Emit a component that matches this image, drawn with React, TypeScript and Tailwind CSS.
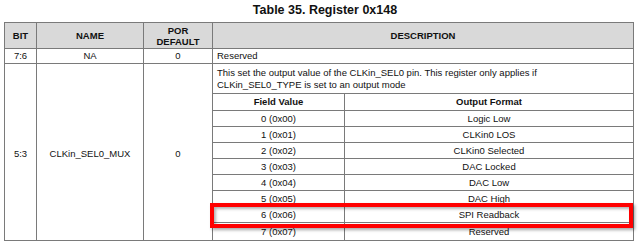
import React from 'react';

// register 0x148, CLKin_SEL0_MUX field values
const muxValues: [string, string][] = [
  ['0 (0x00)', 'Logic Low'],
  ['1 (0x01)', 'CLKin0 LOS'],
  ['2 (0x02)', 'CLKin0 Selected'],
  ['3 (0x03)', 'DAC Locked'],
  ['4 (0x04)', 'DAC Low'],
  ['5 (0x05)', 'DAC High'],
  ['6 (0x06)', 'SPI Readback'],
  ['7 (0x07)', 'Reserved'],
];

const cell = 'flex items-center justify-center border-r border-[#7a7a7a]';

export default function App() {
  return (
    <div className="relative w-[640px] h-[242px] bg-white overflow-hidden text-[#111] font-['Liberation_Sans',Arial,sans-serif]">
      {/* Title */}
      <div className="h-[22px] flex items-center justify-center pl-[10px] pb-[2px] text-[12.5px] font-bold">
        Table 35. Register 0x148
      </div>

      {/* Register table */}
      <div className="ml-[4px] w-[630px] border border-[#7a7a7a] text-[9.5px] leading-[12px]">
        {/* header */}
        <div className="flex h-[26px] bg-[#d9d9d9] border-b border-[#7a7a7a] font-bold">
          <div className={`${cell} w-[32px]`}>BIT</div>
          <div className={`${cell} w-[107px]`}>NAME</div>
          <div className={`${cell} w-[69px] flex-col leading-[11px] text-center`}>
            <span>POR</span>
            <span>DEFAULT</span>
          </div>
          <div className="flex-1 flex items-center justify-center">DESCRIPTION</div>
        </div>

        {/* 7:6 */}
        <div className="flex h-[15px] border-b border-[#7a7a7a]">
          <div className={`${cell} w-[32px]`}>7:6</div>
          <div className={`${cell} w-[107px]`}>NA</div>
          <div className={`${cell} w-[69px]`}>0</div>
          <div className="flex-1 flex items-center pl-[4px]">Reserved</div>
        </div>

        {/* 5:3 */}
        <div className="flex h-[176px]">
          <div className={`${cell} w-[32px] pt-[4px]`}>5:3</div>
          <div className={`${cell} w-[107px] pt-[4px]`}>CLKin_SEL0_MUX</div>
          <div className={`${cell} w-[69px] pt-[4px]`}>0</div>
          <div className="flex-1 flex flex-col">
            <div className="h-[30px] border-b border-[#7a7a7a] pl-[4px] pt-[3px]">
              This set the output value of the CLKin_SEL0 pin. This register only applies if
              <br />
              CLKin_SEL0_TYPE is set to an output mode
            </div>
            <div className="flex h-[17px] border-b border-[#7a7a7a] font-bold">
              <div className={`${cell} w-[132px]`}>Field Value</div>
              <div className="flex-1 flex items-center justify-center">Output Format</div>
            </div>
            {muxValues.map(([value, format], i) => (
              <div
                key={value}
                className={`flex ${i < muxValues.length - 1 ? 'h-[16px] border-b border-[#7a7a7a]' : 'flex-1'}`}
              >
                <div className={`${cell} w-[132px] pt-[1px]`}>{value}</div>
                <div className="flex-1 flex items-center justify-center pt-[1px]">{format}</div>
              </div>
            ))}
          </div>
        </div>
      </div>

      {/* highlight drawn over the SPI Readback row */}
      <div className="absolute left-[210px] top-[203px] w-[423px] h-[25px] border-4 border-[#ff0000] shadow-[2px_2px_3px_rgba(0,0,0,0.35),inset_2px_2px_3px_rgba(0,0,0,0.3)]" />
    </div>
  );
}
